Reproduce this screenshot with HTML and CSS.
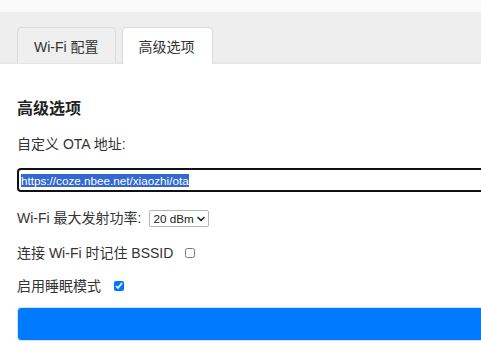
FILE: index.html
```html
<!DOCTYPE html>
<html lang="zh">
<head>
<meta charset="utf-8">
<title>高级选项</title>
<link rel="stylesheet" href="styles.css">
</head>
<body>
<div class="topbar"></div>
<div class="tabs">
  <div class="tab">Wi-Fi 配置</div>
  <div class="tab active">高级选项</div>
</div>
<div class="content">
  <h2 class="title">高级选项</h2>
  <label class="field-label" for="ota">自定义 OTA 地址:</label>
  <input class="text-input" id="ota" type="text" value="https://coze.nbee.net/xiaozhi/ota">
  <div class="row row-select">
    <label class="row-label" for="power">Wi-Fi 最大发射功率:</label>
    <span class="select-wrap">
      <select class="select" id="power"><option>20 dBm</option></select>
      <svg class="chevron" width="8" height="6" viewBox="0 0 8 6" aria-hidden="true"><path d="M1 1.5 L4 4.5 L7 1.5" fill="none" stroke="#222" stroke-width="1.6" stroke-linecap="round" stroke-linejoin="round"/></svg>
    </span>
  </div>
  <div class="row row-bssid">
    <label class="row-label" for="bssid">连接 Wi-Fi 时记住 BSSID</label>
    <input class="check" id="bssid" type="checkbox">
  </div>
  <div class="row row-sleep">
    <label class="row-label" for="sleep">启用睡眠模式</label>
    <input class="check" id="sleep" type="checkbox" checked>
  </div>
  <button class="save" type="button"></button>
</div>
<script src="script.js"></script>
</body>
</html>
```

FILE: styles.css
```css
html, body {
  margin: 0;
  padding: 0;
  overflow: hidden;
  background: #ffffff;
}
body {
  font-family: "Liberation Sans", "Noto Sans CJK SC", sans-serif;
  color: #333333;
}
.topbar {
  height: 12px;
  background: #f9f9f9;
}
.tabs {
  display: flex;
  gap: 6px;
  padding: 15px 0 0 17px;
  background: #eeeeee;
  border-bottom: 2px solid #e6e6e6;
  height: 35px;
}
.tab {
  box-sizing: border-box;
  height: 36px;
  padding: 0 16px;
  display: flex;
  align-items: center;
  font-size: 14px;
  color: #333;
  background: #efefef;
  border: 1px solid #dadada;
  border-bottom: none;
  border-radius: 5px 5px 0 0;
}
.tab.active {
  background: #ffffff;
  height: 37px;
  margin-bottom: -2px;
  width: 91px;
}
.content {
  padding: 0 0 0 17px;
  overflow: hidden;
}
.title {
  margin: 35px 0 0;
  font-size: 16px;
  line-height: 20px;
  font-weight: bold;
  color: #222;
}
.field-label {
  display: block;
  margin-top: 15px;
  font-size: 14px;
  line-height: 20px;
}
.text-input {
  display: block;
  box-sizing: border-box;
  margin-top: 14px;
  width: calc(100% + 40px);
  height: 24px;
  padding: 0 3px;
  font-family: "Liberation Sans", sans-serif;
  font-size: 11.7px;
  color: #333;
  border: 1px solid #999;
  border-radius: 3px;
}
.row {
  display: flex;
  align-items: center;
  height: 20px;
  font-size: 14px;
}
.row-select { margin-top: 16px; }
.row-bssid { margin-top: 15px; }
.row-sleep { margin-top: 13px; }
.row-label {
  line-height: 20px;
}
.select-wrap {
  position: relative;
  display: inline-flex;
  margin-left: 8px;
}
.select {
  -webkit-appearance: none;
  appearance: none;
  box-sizing: border-box;
  width: 60px;
  height: 17px;
  margin: 0;
  padding: 0 0 0 3px;
  font-family: "Liberation Sans", sans-serif;
  font-size: 11.7px;
  line-height: 15px;
  color: #222;
  border: 1px solid #b5b5b5;
  border-radius: 2px;
  background: #fff;
}
.chevron {
  position: absolute;
  right: 4px;
  top: 6px;
  pointer-events: none;
}
.check {
  margin: 0 0 0 12px;
  width: 10px;
  height: 10px;
}
.row-sleep .check { margin-left: 13px; }
.save {
  display: block;
  margin-top: 11px;
  width: calc(100% + 40px);
  height: 34px;
  border: 1px solid #cfe3fb;
  border-radius: 4px;
  background: #007bff;
}
```

FILE: script.js
```js
var el = document.getElementById('ota');
el.focus({ preventScroll: true });
el.select();
el.scrollLeft = 0;
window.scrollTo(0, 0);
document.querySelector('.content').scrollLeft = 0;
```
